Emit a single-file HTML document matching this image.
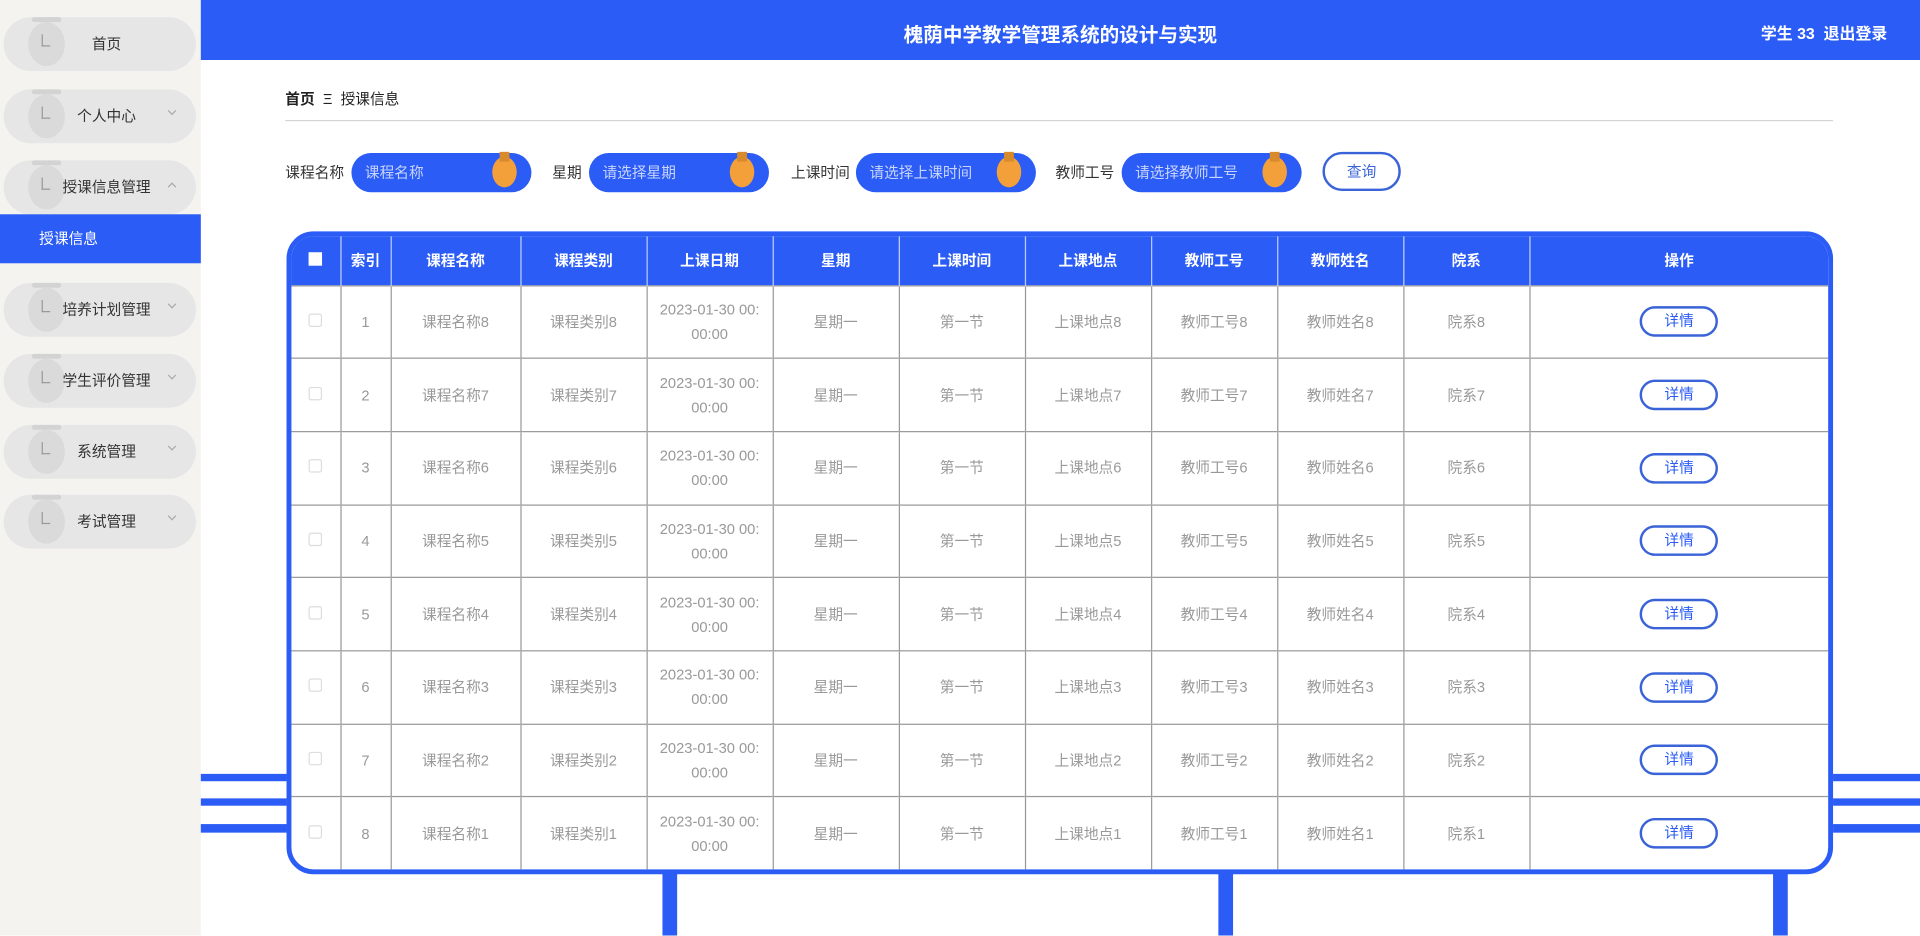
<!DOCTYPE html>
<html><head><meta charset="utf-8"><style>
*{margin:0;padding:0;box-sizing:border-box}
html,body{width:1920px;height:936px;overflow:hidden;background:#fff}
body{font-family:"Liberation Sans","Noto Sans CJK SC",sans-serif}
#w{position:absolute;left:0;top:0;width:1568px;height:764px;transform:scale(1.22449);transform-origin:0 0;background:#fff}
.abs{position:absolute}
#side{left:0;top:0;width:164px;height:764px;background:#f4f3f0}
.mi{position:absolute;left:3px;width:157px;height:44px;border-radius:22px;background:#e6e6e6;font-size:12px;color:#333}
.mi .ic{position:absolute;left:20px;top:4px;width:30px;height:36px;border-radius:50%;background:#dadada}
.mi .ic:before{content:"";position:absolute;left:3px;top:-4px;width:24px;height:4px;background:#d3d3d3;border-radius:2px}
.mi .ic:after{content:"";position:absolute;left:11px;top:10px;width:6px;height:9px;border-left:1px solid #999;border-bottom:1px solid #999}
.mi .t{position:absolute;top:0;line-height:44px}
.mi .ar{position:absolute;left:135px;top:15px;width:5px;height:5px;border-right:1px solid #aaa;border-bottom:1px solid #aaa;transform:rotate(45deg)}
.mi .ar.up{top:19px;transform:rotate(-135deg)}
#hdr{left:164px;top:0;width:1404px;height:49px;background:#2b5cf6;color:#fff;font-weight:bold}
.lbl{position:absolute;top:132px;font-size:12px;color:#333}
.inp{position:absolute;top:125px;height:32px;border-radius:16px;background:#2b5cf6;color:#c9d5ff;font-size:12px;line-height:32px;padding-left:11px}
.inp .o{position:absolute;right:12px;top:3px;width:20px;height:25px;border-radius:50%;background:#f3a03b}
.inp .o:before{content:"";position:absolute;left:6px;top:-4px;width:8px;height:8px;background:#d98a2a}
#tbl{left:234px;top:189px;width:1263px;height:525px;border:4px solid #2b5cf6;border-radius:22px;overflow:hidden;background:#fff}
table{border-collapse:collapse;width:1255px;table-layout:fixed}
th{background:#2b5cf6;color:#fff;font-size:12px;height:40px;border-left:1px solid #b9c9ff;font-weight:bold}
td{height:59.7px;border-left:1px solid #999;border-top:1px solid #999;text-align:center;font-size:12px;color:#999;line-height:20px}
th:first-child,td:first-child{border-left:none}
.cb{display:inline-block;width:11px;height:11px;border:1px solid #ddd;border-radius:2px}
.bt{display:inline-block;width:64px;height:25px;border:2px solid #3a63d8;border-radius:13px;color:#2b5cf6;line-height:21px;font-size:12px}
.bar{position:absolute;background:#2b5cf6}
</style></head><body><div id="w">
<div id="side" class="abs">
<div class="mi" style="top:14px"><div class="ic"></div><span class="t" style="left:72px">首页</span></div>
<div class="mi" style="top:73px"><div class="ic"></div><span class="t" style="left:60px">个人中心</span><div class="ar"></div></div>
<div class="mi" style="top:131px"><div class="ic"></div><span class="t" style="left:48px">授课信息管理</span><div class="ar up"></div></div>
<div class="abs" style="left:0;top:175px;width:164px;height:40px;background:#2b5cf6;color:#fff;font-size:12px;line-height:40px;padding-left:32px">授课信息</div>
<div class="mi" style="top:231px"><div class="ic"></div><span class="t" style="left:48px">培养计划管理</span><div class="ar"></div></div>
<div class="mi" style="top:289px"><div class="ic"></div><span class="t" style="left:48px">学生评价管理</span><div class="ar"></div></div>
<div class="mi" style="top:347px"><div class="ic"></div><span class="t" style="left:60px">系统管理</span><div class="ar"></div></div>
<div class="mi" style="top:404px"><div class="ic"></div><span class="t" style="left:60px">考试管理</span><div class="ar"></div></div>
</div>
<div id="hdr" class="abs"><div class="abs" style="left:0;width:1404px;top:15px;text-align:center;font-size:16px">槐荫中学教学管理系统的设计与实现</div><div class="abs" style="left:1274px;top:17px;font-size:13px">学生 33&nbsp;&nbsp;退出登录</div></div>
<div class="abs" style="left:233px;top:72px;font-size:12px;color:#222"><b>首页</b>&nbsp;&nbsp;Ξ&nbsp;&nbsp;授课信息</div>
<div class="abs" style="left:233px;top:98px;width:1264px;height:1px;background:#d4d4d4"></div>
<span class="lbl" style="left:233px">课程名称</span><div class="inp" style="left:287px;width:147px">课程名称<div class="o"></div></div>
<span class="lbl" style="left:451px">星期</span><div class="inp" style="left:481px;width:147px">请选择星期<div class="o"></div></div>
<span class="lbl" style="left:646px">上课时间</span><div class="inp" style="left:699px;width:147px">请选择上课时间<div class="o"></div></div>
<span class="lbl" style="left:862px">教师工号</span><div class="inp" style="left:916px;width:147px">请选择教师工号<div class="o"></div></div>
<div class="abs" style="left:1080px;top:124px;width:64px;height:32px;border:2px solid #3a63d8;border-radius:16px;text-align:center;line-height:28px;font-size:12px;color:#3a63d8">查询</div>
<div class="bar" style="left:164px;top:632px;width:70px;height:6px"></div>
<div class="bar" style="left:164px;top:652px;width:70px;height:6px"></div>
<div class="bar" style="left:164px;top:673px;width:70px;height:7px"></div>
<div class="bar" style="left:1497px;top:632px;width:71px;height:6px"></div>
<div class="bar" style="left:1497px;top:652px;width:71px;height:6px"></div>
<div class="bar" style="left:1497px;top:673px;width:71px;height:7px"></div>
<div class="bar" style="left:541px;top:712px;width:12px;height:52px"></div>
<div class="bar" style="left:995px;top:712px;width:12px;height:52px"></div>
<div class="bar" style="left:1448px;top:712px;width:12px;height:52px"></div>
<div id="tbl" class="abs"><table>
<colgroup><col style="width:40px"><col style="width:41px"><col style="width:106px"><col style="width:103px"><col style="width:103px"><col style="width:103px"><col style="width:103px"><col style="width:103px"><col style="width:103px"><col style="width:103px"><col style="width:103px"><col></colgroup>
<tr><th><span style="display:inline-block;width:11px;height:11px;background:#fff"></span></th><th>索引</th><th>课程名称</th><th>课程类别</th><th>上课日期</th><th>星期</th><th>上课时间</th><th>上课地点</th><th>教师工号</th><th>教师姓名</th><th>院系</th><th>操作</th></tr>
<tr><td><span class="cb"></span></td><td>1</td><td>课程名称8</td><td>课程类别8</td><td>2023-01-30 00:<br>00:00</td><td>星期一</td><td>第一节</td><td>上课地点8</td><td>教师工号8</td><td>教师姓名8</td><td>院系8</td><td><span class="bt">详情</span></td></tr>
<tr><td><span class="cb"></span></td><td>2</td><td>课程名称7</td><td>课程类别7</td><td>2023-01-30 00:<br>00:00</td><td>星期一</td><td>第一节</td><td>上课地点7</td><td>教师工号7</td><td>教师姓名7</td><td>院系7</td><td><span class="bt">详情</span></td></tr>
<tr><td><span class="cb"></span></td><td>3</td><td>课程名称6</td><td>课程类别6</td><td>2023-01-30 00:<br>00:00</td><td>星期一</td><td>第一节</td><td>上课地点6</td><td>教师工号6</td><td>教师姓名6</td><td>院系6</td><td><span class="bt">详情</span></td></tr>
<tr><td><span class="cb"></span></td><td>4</td><td>课程名称5</td><td>课程类别5</td><td>2023-01-30 00:<br>00:00</td><td>星期一</td><td>第一节</td><td>上课地点5</td><td>教师工号5</td><td>教师姓名5</td><td>院系5</td><td><span class="bt">详情</span></td></tr>
<tr><td><span class="cb"></span></td><td>5</td><td>课程名称4</td><td>课程类别4</td><td>2023-01-30 00:<br>00:00</td><td>星期一</td><td>第一节</td><td>上课地点4</td><td>教师工号4</td><td>教师姓名4</td><td>院系4</td><td><span class="bt">详情</span></td></tr>
<tr><td><span class="cb"></span></td><td>6</td><td>课程名称3</td><td>课程类别3</td><td>2023-01-30 00:<br>00:00</td><td>星期一</td><td>第一节</td><td>上课地点3</td><td>教师工号3</td><td>教师姓名3</td><td>院系3</td><td><span class="bt">详情</span></td></tr>
<tr><td><span class="cb"></span></td><td>7</td><td>课程名称2</td><td>课程类别2</td><td>2023-01-30 00:<br>00:00</td><td>星期一</td><td>第一节</td><td>上课地点2</td><td>教师工号2</td><td>教师姓名2</td><td>院系2</td><td><span class="bt">详情</span></td></tr>
<tr><td><span class="cb"></span></td><td>8</td><td>课程名称1</td><td>课程类别1</td><td>2023-01-30 00:<br>00:00</td><td>星期一</td><td>第一节</td><td>上课地点1</td><td>教师工号1</td><td>教师姓名1</td><td>院系1</td><td><span class="bt">详情</span></td></tr>
</table></div>
</div></body></html>
